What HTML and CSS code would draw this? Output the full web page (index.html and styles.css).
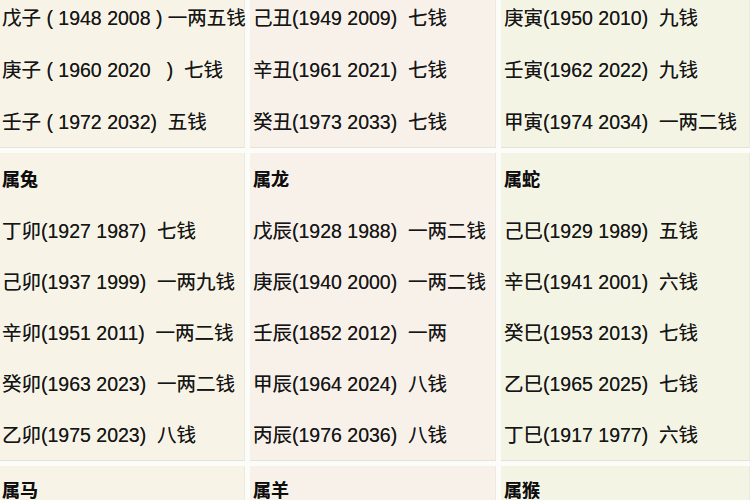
FILE: index.html
```html
<!DOCTYPE html>
<html lang="zh">
<head>
<meta charset="utf-8">
<title>称骨表</title>
<link rel="stylesheet" href="styles.css">
</head>
<body>
<div class="table">
  <div class="cell c1 top">
    <div class="line">戊子 ( 1948 2008 ) 一两五钱</div>
    <div class="line">庚子 ( 1960 2020   )  七钱</div>
    <div class="line">壬子 ( 1972 2032)  五钱</div>
  </div>
  <div class="cell c2 top">
    <div class="line">己丑(1949 2009)  七钱</div>
    <div class="line">辛丑(1961 2021)  七钱</div>
    <div class="line">癸丑(1973 2033)  七钱</div>
  </div>
  <div class="cell c3 top">
    <div class="line">庚寅(1950 2010)  九钱</div>
    <div class="line">壬寅(1962 2022)  九钱</div>
    <div class="line">甲寅(1974 2034)  一两二钱</div>
  </div>

  <div class="cell c1">
    <div class="head">属兔</div>
    <div class="row">丁卯(1927 1987)  七钱</div>
    <div class="row">己卯(1937 1999)  一两九钱</div>
    <div class="row">辛卯(1951 2011)  一两二钱</div>
    <div class="row">癸卯(1963 2023)  一两二钱</div>
    <div class="row">乙卯(1975 2023)  八钱</div>
  </div>
  <div class="cell c2">
    <div class="head">属龙</div>
    <div class="row">戊辰(1928 1988)  一两二钱</div>
    <div class="row">庚辰(1940 2000)  一两二钱</div>
    <div class="row">壬辰(1852 2012)  一两</div>
    <div class="row">甲辰(1964 2024)  八钱</div>
    <div class="row">丙辰(1976 2036)  八钱</div>
  </div>
  <div class="cell c3">
    <div class="head">属蛇</div>
    <div class="row">己巳(1929 1989)  五钱</div>
    <div class="row">辛巳(1941 2001)  六钱</div>
    <div class="row">癸巳(1953 2013)  七钱</div>
    <div class="row">乙巳(1965 2025)  七钱</div>
    <div class="row">丁巳(1917 1977)  六钱</div>
  </div>

  <div class="cell c1 last">
    <div class="head">属马</div>
  </div>
  <div class="cell c2 last">
    <div class="head">属羊</div>
  </div>
  <div class="cell c3 last">
    <div class="head">属猴</div>
  </div>
</div>
</body>
</html>
```

FILE: styles.css
```css
html, body {
  margin: 0;
  padding: 0;
  background: #fcfcf9;
  overflow: hidden;
}

body {
  width: 750px;
  height: 500px;
  font-family: "Liberation Sans", "Noto Sans CJK SC", sans-serif;
  font-size: 19.5px;
  color: #151515;
}

.table {
  display: grid;
  grid-template-columns: 245px 246px 1fr;
  column-gap: 5px;
  row-gap: 5px;
  margin-top: -8px;
  background: #fcfcf9;
}

.cell {
  padding: 2px 0 0 3px;
  box-shadow: inset 0 -1px 0 #e4e2d9, inset -1px 0 0 #ebe9e1;
}

.cell.top {
  padding-top: 0;
}

.c1 { background: #f7f4e7; padding-left: 2px; }
.c2 { background: #f8f1ea; }
.c3 { background: #f4f4e5; }

.line,
.row,
.head {
  white-space: pre;
  text-shadow: 0 0 0.4px rgba(0, 0, 0, 0.6);
}

.line {
  line-height: 52px;
  height: 52px;
}

.row {
  line-height: 51px;
  height: 51px;
}

.head {
  line-height: 51px;
  height: 51px;
  font-weight: bold;
  font-size: 18px;
  color: #0e0e0e;
}

.last {
  height: 40px;
}

.last .head {
  line-height: 46px;
}
```
